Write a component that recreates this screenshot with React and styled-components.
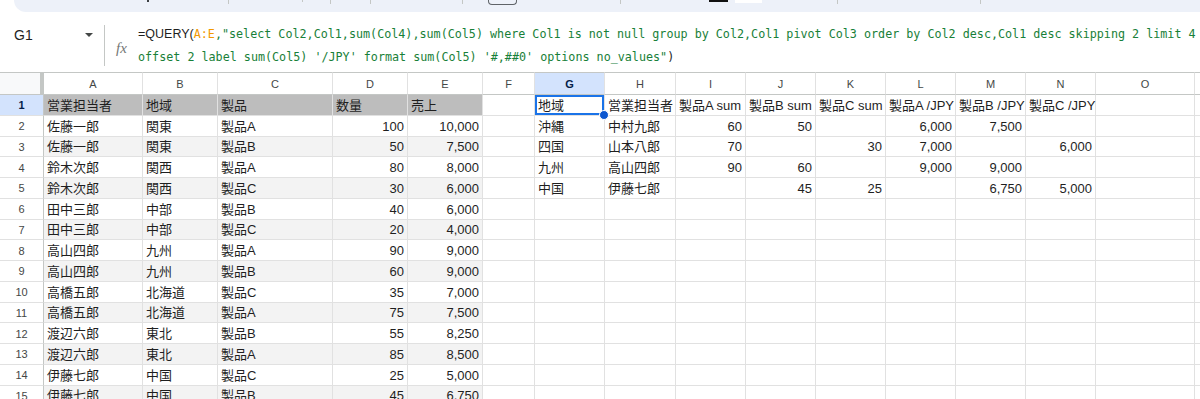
import React from 'react';
import styled, { createGlobalStyle } from 'styled-components';

const GlobalStyle = createGlobalStyle`
  html, body { margin: 0; padding: 0; background: #ffffff; }
  body {
    font-family: "Liberation Sans", "Noto Sans CJK JP", Arial, sans-serif;
    overflow: hidden;
  }
`;

const Page = styled.div`
  width: 1200px;
  height: 399px;
  overflow: hidden;
  display: flex;
  flex-direction: column;
  background: #ffffff;
`;

const Toolbar = styled.div`
  flex: none;
  height: 12px;
  margin-left: 14px;
  background: #edf1f9;
  border-bottom-left-radius: 14px;
  display: flex;
  align-items: flex-start;
`;

const Mark = styled.div`
  flex: none;
  margin-left: ${(p) => p.$gap}px;
  width: ${(p) => p.$w}px;
  height: ${(p) => p.$h}px;
  background: ${(p) => p.$bg};
  box-sizing: border-box;
  border: ${(p) => (p.$outline ? `1px solid ${p.$outline}` : 'none')};
  border-top: none;
  border-radius: 0 0 ${(p) => p.$r || 0}px ${(p) => p.$r || 0}px;
`;

const FormulaBar = styled.div`
  flex: none;
  height: 60px;
  box-sizing: border-box;
  padding-top: 11px;
  display: flex;
  align-items: flex-start;
  background: #ffffff;
`;

const NameBox = styled.div`
  flex: none;
  width: 104px;
  height: 23px;
  box-sizing: border-box;
  padding: 0 11px 0 14px;
  display: flex;
  align-items: center;
  justify-content: space-between;
  font-size: 14px;
  color: #1f1f1f;
`;

const Arrow = styled.span`
  width: 0;
  height: 0;
  border-left: 4px solid transparent;
  border-right: 4px solid transparent;
  border-top: 4px solid #444746;
`;

const Divider = styled.div`
  flex: none;
  width: 1px;
  height: 41px;
  margin-top: 2px;
  background: #c4c7c5;
`;

const Fx = styled.div`
  flex: none;
  width: 33px;
  height: 50px;
  display: flex;
  align-items: center;
  justify-content: center;
  font-family: "Liberation Serif", "DejaVu Serif", serif;
  font-style: italic;
  font-size: 15px;
  color: #747775;
`;

const FormulaText = styled.div`
  flex: 1;
  font-family: "DejaVu Sans Mono", "Liberation Mono", monospace;
  font-size: 11.72px;
  line-height: 23px;
  white-space: pre;
  color: #188038;
`;

const Line = styled.div``;

const Tok = styled.span`
  color: ${(p) => p.$color};
  font-family: ${(p) =>
    p.$sans ? '"Liberation Sans", Arial, sans-serif' : 'inherit'};
  font-size: ${(p) => (p.$sans ? '12.5px' : 'inherit')};
`;

const Grid = styled.div`
  display: grid;
  grid-template-columns: 44px 99px 75px 115px 75px 75px 52px 70px 71px 70px 70px 70px 70px 70px 70px 99px 1fr;
  grid-template-rows: 23px repeat(15, 20.75px);
`;

const Corner = styled.div`
  box-sizing: border-box;
  background: #f8f9fa;
  border-top: 1px solid #c4c7c5;
  border-right: 4px solid #c4c7c5;
  border-bottom: 1px solid #c4c7c5;
`;

const ColHeader = styled.div`
  box-sizing: border-box;
  display: flex;
  align-items: center;
  justify-content: center;
  font-size: 11px;
  background: ${(p) => (p.$active ? '#d3e3fd' : '#ffffff')};
  color: ${(p) => (p.$active ? '#041e49' : '#444746')};
  font-weight: ${(p) => (p.$active ? 700 : 400)};
  border-top: 1px solid #c4c7c5;
  border-right: 1px solid #e1e1e1;
  border-bottom: 1px solid #c4c7c5;
`;

const RowHeader = styled.div`
  box-sizing: border-box;
  display: flex;
  align-items: center;
  justify-content: center;
  padding-top: 1px;
  font-size: 11px;
  background: ${(p) => (p.$active ? '#d3e3fd' : '#ffffff')};
  color: ${(p) => (p.$active ? '#041e49' : '#444746')};
  font-weight: ${(p) => (p.$active ? 700 : 400)};
  border-right: 1px solid #c4c7c5;
  border-bottom: 1px solid #e1e1e1;
`;

const Cell = styled.div`
  position: relative;
  box-sizing: border-box;
  display: flex;
  align-items: flex-end;
  justify-content: ${(p) => (p.$num ? 'flex-end' : 'flex-start')};
  padding: 0 3px 2px 3px;
  font-size: 13px;
  line-height: 15px;
  white-space: nowrap;
  color: #1f1f1f;
  background: ${(p) => p.$bg || 'transparent'};
  border-right: 1px solid #e1e1e1;
  border-bottom: 1px solid #e1e1e1;
  box-shadow: ${(p) => (p.$selected ? 'inset 0 0 0 2px #1a73e8' : 'none')};
`;

const Handle = styled.span`
  position: absolute;
  right: -5px;
  bottom: -5px;
  width: 8px;
  height: 8px;
  border-radius: 50%;
  background: #0b57d0;
  border: 1px solid #ffffff;
  z-index: 3;
`;

const COLS = ['A', 'B', 'C', 'D', 'E', 'F', 'G', 'H', 'I', 'J', 'K', 'L', 'M', 'N', 'O', ''];

const SOURCE = [
  ['営業担当者', '地域', '製品', '数量', '売上'],
  ['佐藤一郎', '関東', '製品A', '100', '10,000'],
  ['佐藤一郎', '関東', '製品B', '50', '7,500'],
  ['鈴木次郎', '関西', '製品A', '80', '8,000'],
  ['鈴木次郎', '関西', '製品C', '30', '6,000'],
  ['田中三郎', '中部', '製品B', '40', '6,000'],
  ['田中三郎', '中部', '製品C', '20', '4,000'],
  ['高山四郎', '九州', '製品A', '90', '9,000'],
  ['高山四郎', '九州', '製品B', '60', '9,000'],
  ['高橋五郎', '北海道', '製品C', '35', '7,000'],
  ['高橋五郎', '北海道', '製品A', '75', '7,500'],
  ['渡辺六郎', '東北', '製品B', '55', '8,250'],
  ['渡辺六郎', '東北', '製品A', '85', '8,500'],
  ['伊藤七郎', '中国', '製品C', '25', '5,000'],
  ['伊藤七郎', '中国', '製品B', '45', '6,750'],
];

const RESULT = [
  ['地域', '営業担当者', '製品A sum', '製品B sum', '製品C sum', '製品A /JPY', '製品B /JPY', '製品C /JPY'],
  ['沖縄', '中村九郎', '60', '50', '', '6,000', '7,500', ''],
  ['四国', '山本八郎', '70', '', '30', '7,000', '', '6,000'],
  ['九州', '高山四郎', '90', '60', '', '9,000', '9,000', ''],
  ['中国', '伊藤七郎', '', '45', '25', '', '6,750', '5,000'],
];

const isNum = (v) => /^[0-9,]+$/.test(v);

function rowValues(r) {
  const src = SOURCE[r] || ['', '', '', '', ''];
  const res = RESULT[r] || ['', '', '', '', '', '', '', ''];
  return [...src, '', ...res, '', ''];
}

function bandColor(r, c) {
  if (c > 4) return undefined;
  if (r === 0) return '#bdbdbd';
  if (r % 2 === 0) return '#f3f3f3';
  return undefined;
}

const TOOL_MARKS = [
  { gap: 133, w: 2, h: 2, bg: '#3c4043' },
  { gap: 79, w: 1, h: 4, bg: '#c4c7c5' },
  { gap: 73, w: 1, h: 2, bg: '#c4c7c5' },
  { gap: 27, w: 1, h: 4, bg: '#c4c7c5' },
  { gap: 39, w: 1, h: 4, bg: '#c4c7c5' },
  { gap: 91, w: 1, h: 4, bg: '#c4c7c5' },
  { gap: 25, w: 29, h: 5, bg: 'transparent', outline: '#5f6368', r: 4 },
  { gap: 103, w: 1, h: 4, bg: '#c4c7c5' },
  { gap: 88, w: 19, h: 2, bg: '#111111' },
  { gap: 7, w: 27, h: 3, bg: '#ffffff' },
  { gap: 75, w: 1, h: 4, bg: '#c4c7c5' },
  { gap: 142, w: 1, h: 4, bg: '#c4c7c5' },
];

export default function App() {
  return (
    <Page>
      <GlobalStyle />
      <Toolbar>
        {TOOL_MARKS.map((m, i) => (
          <Mark key={i} $gap={m.gap} $w={m.w} $h={m.h} $bg={m.bg} $outline={m.outline} $r={m.r} />
        ))}
      </Toolbar>
      <FormulaBar>
        <NameBox>
          <span>G1</span>
          <Arrow />
        </NameBox>
        <Divider />
        <Fx>fx</Fx>
        <FormulaText>
          <Line>
            <Tok $color="#1f1f1f" $sans>=QUERY(</Tok>
            <Tok $color="#f29900">A:E</Tok>
            <Tok $color="#188038">
              ,"select Col2,Col1,sum(Col4),sum(Col5) where Col1 is not null group by Col2,Col1 pivot Col3 order by Col2 desc,Col1 desc skipping 2 limit 4
            </Tok>
          </Line>
          <Line>
            <Tok $color="#188038">offset 2 label sum(Col5) '/JPY' format sum(Col5) '#,##0' options no_values"</Tok>
            <Tok $color="#1f1f1f">)</Tok>
          </Line>
        </FormulaText>
      </FormulaBar>
      <Grid>
        <Corner />
        {COLS.map((c, i) => (
          <ColHeader key={'h' + i} $active={c === 'G'}>
            {c}
          </ColHeader>
        ))}
        {Array.from({ length: 15 }).map((_, r) => (
          <React.Fragment key={'r' + r}>
            <RowHeader $active={r === 0}>{r + 1}</RowHeader>
            {rowValues(r).map((v, c) => (
              <Cell
                key={c}
                $num={isNum(v) && r > 0}
                $bg={bandColor(r, c)}
                $selected={r === 0 && c === 6}
              >
                {v}
                {r === 0 && c === 6 && <Handle />}
              </Cell>
            ))}
          </React.Fragment>
        ))}
      </Grid>
    </Page>
  );
}
